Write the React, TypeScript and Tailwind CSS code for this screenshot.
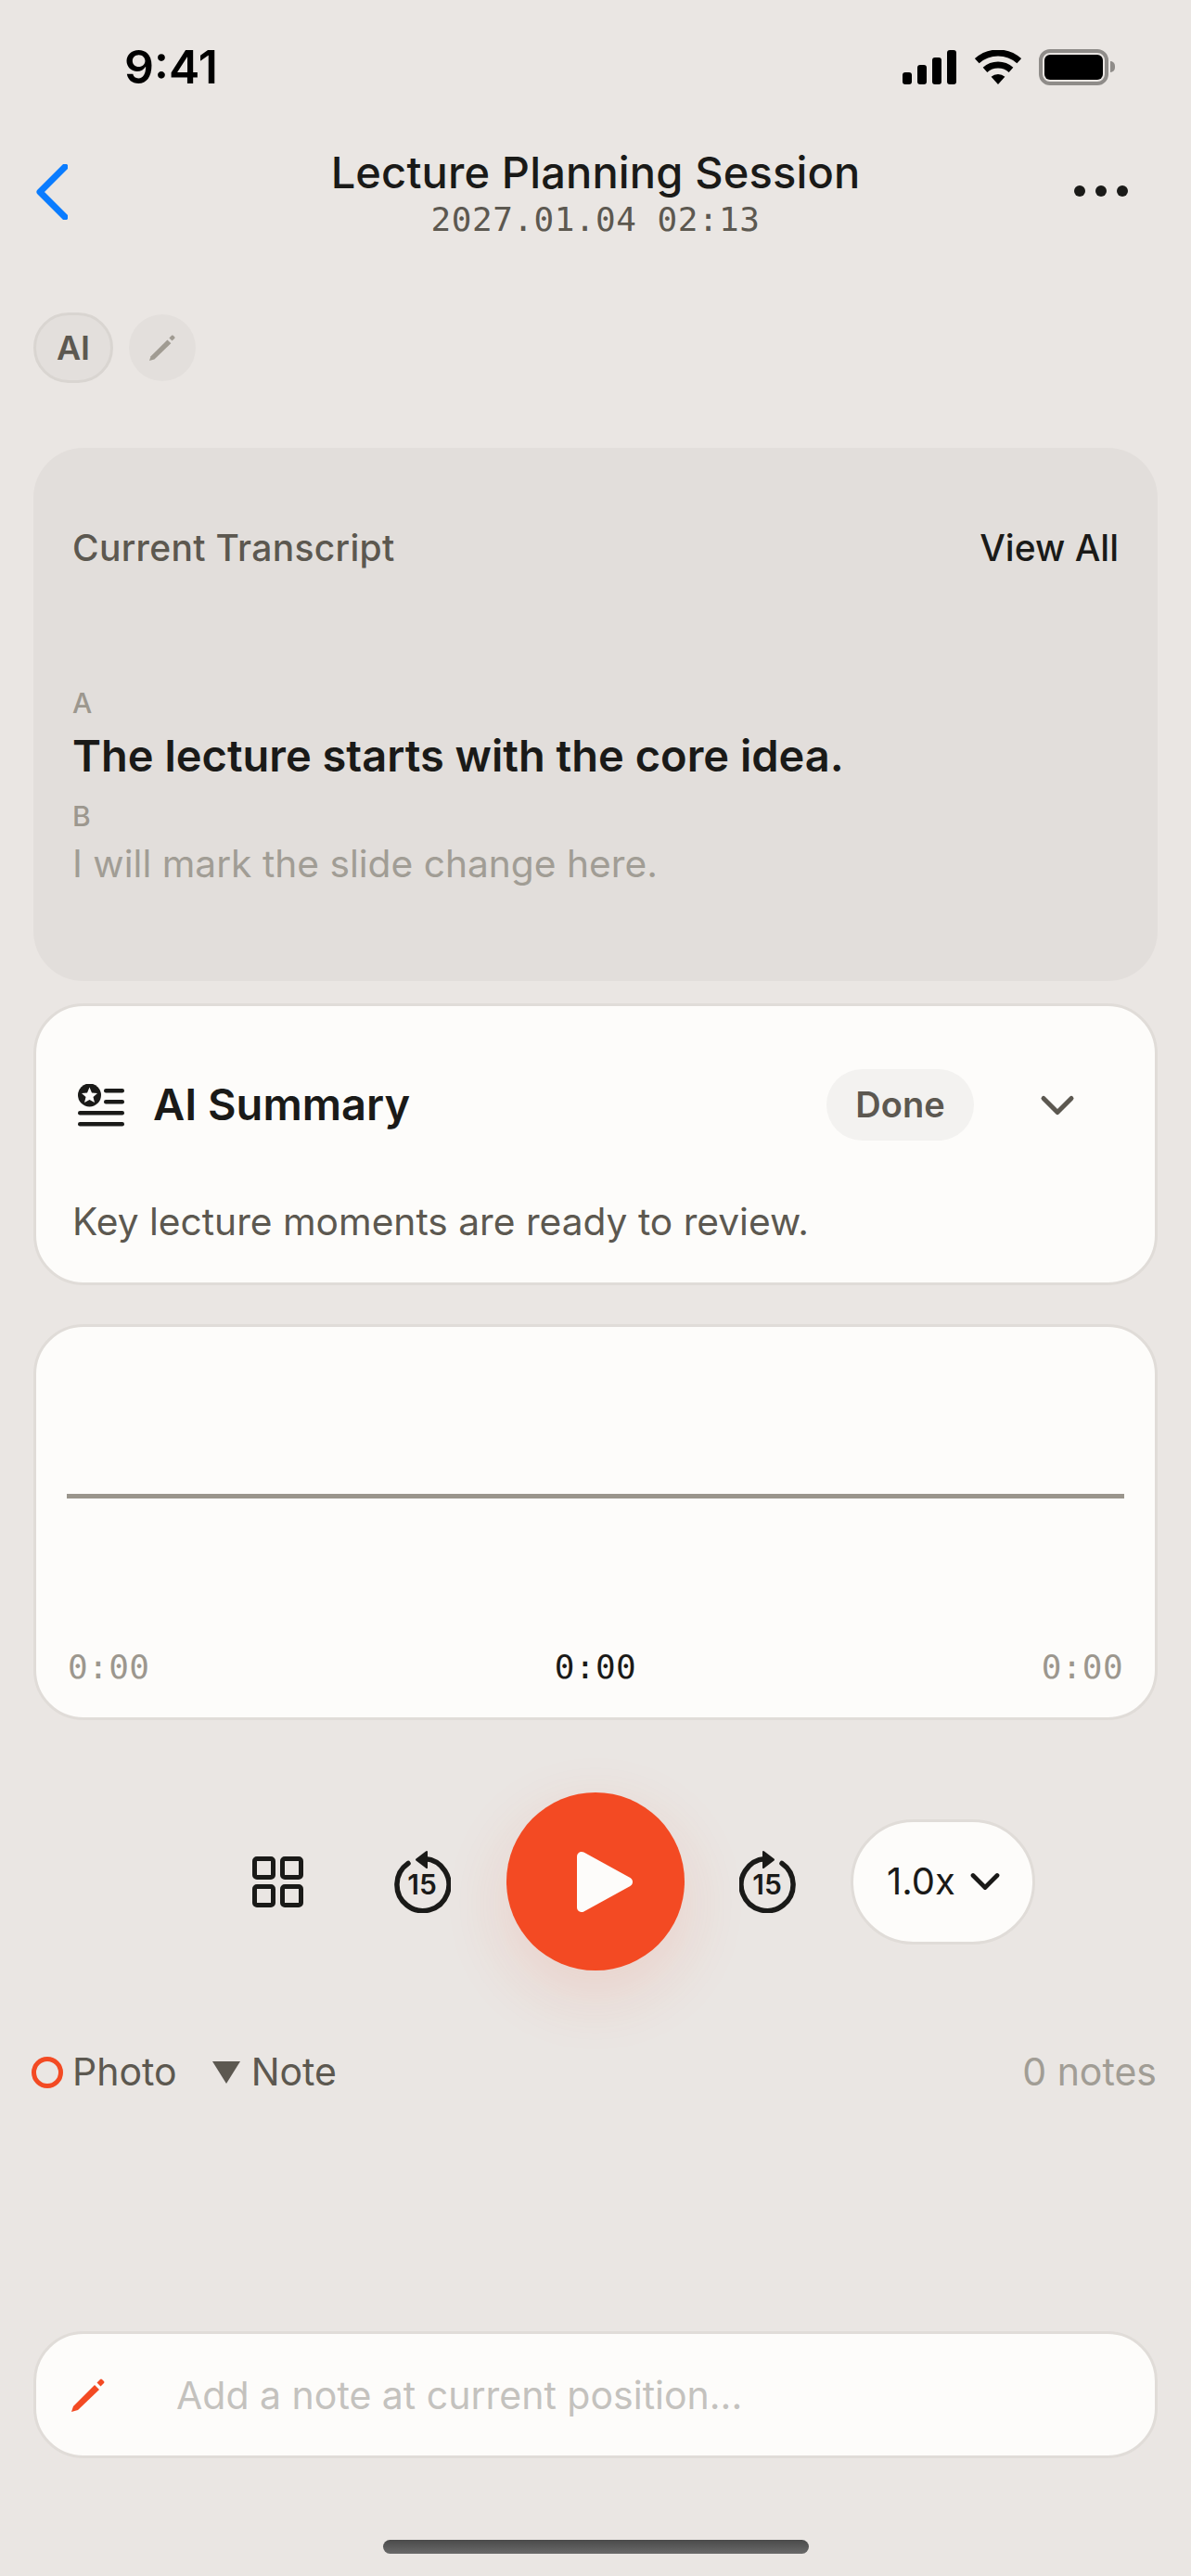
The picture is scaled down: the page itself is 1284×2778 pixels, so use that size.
import { ChevronDown } from 'lucide-react';

const Pencil = ({ className }: { className: string }) => (
  <svg viewBox="0 0 36 36" className={className} fill="currentColor">
    <path d="M0 36 L2 30 L25 7 L30 12 L7 34 Z" />
    <path d="M27.5 4.5 L31 1 Q32 0 33 1 L35 3 Q36 4 35 5 L31.5 8.5 Z" />
  </svg>
);

const Skip = ({ forward }: { forward?: boolean }) => (
  <svg viewBox="0 0 61 67" className="w-[61px] h-[67px]">
    <g transform={forward ? 'translate(61 0) scale(-1 1)' : undefined}>
      <path
        d="M15 13.5 A28 28 0 1 0 33 8.6"
        fill="none"
        stroke="#1a1a18"
        strokeWidth="5.5"
        strokeLinecap="round"
      />
      <path d="M36 0.5 L36 18.5 Q35 19.5 34 18.5 L23.5 10.5 Q22.5 9.5 23.5 8.5 L34 0.5 Q35 -0.5 36 0.5 Z" fill="#1a1a18" />
    </g>
    <text
      x="30"
      y="47"
      textAnchor="middle"
      fontSize="30"
      fontWeight="600"
      fill="#1a1a18"
      style={{ fontFamily: 'Inter, sans-serif' }}
    >
      15
    </text>
  </svg>
);

export default function App() {
  return (
    <div className="w-[1284px] h-[2778px] bg-[#eae6e3] flex flex-col overflow-hidden font-['Inter',sans-serif] text-[#1a1a18]">
      {/* status bar */}
      <div className="h-[144px] shrink-0 flex items-center justify-between pl-[134px] pr-[82px]">
        <span className="text-[50px] font-semibold leading-none text-black">9:41</span>
        <div className="flex items-center">
          <svg viewBox="0 0 58 37" className="w-[58px] h-[37px]" fill="#000">
            <rect x="0" y="24" width="10" height="13" rx="3" />
            <rect x="16" y="16" width="10" height="21" rx="3" />
            <rect x="32" y="8" width="10" height="29" rx="3" />
            <rect x="48" y="0" width="10" height="37" rx="3" />
          </svg>
          <svg viewBox="0 0 50 37" className="w-[50px] h-[37px] ml-[20px]" fill="none" stroke="#000" strokeWidth="7">
            <path d="M2.3 11.7 A34 34 0 0 1 47.7 11.7" />
            <path d="M11 21.4 A21 21 0 0 1 39 21.4" />
            <path d="M25 37 L17.6 28.8 A11 11 0 0 1 32.4 28.8 Z" fill="#000" stroke="none" />
          </svg>
          <div className="flex items-center gap-[2px] ml-[19px]">
            <div className="w-[75px] h-[39px] rounded-[12px] border-[4px] border-[#8f8c89] p-[2px]">
              <div className="w-full h-full rounded-[6px] bg-black" />
            </div>
            <div className="w-[5px] h-[12px] rounded-r-[5px] bg-[#8f8c89]" />
          </div>
        </div>
      </div>

      {/* header */}
      <div className="h-[126px] shrink-0 relative flex flex-col items-center">
        <div className="text-[47px] leading-[58px] mt-[13px] font-medium tracking-[0.15px]">Lecture Planning Session</div>
        <div className="text-[36px] leading-[44px] text-[#5c5850] font-['DejaVu_Sans_Mono',monospace] tracking-[0.5px]">
          2027.01.04 02:13
        </div>
        <svg viewBox="0 0 34 60" className="absolute left-[39px] top-[33px] w-[34px] h-[60px]" fill="none" stroke="#0a7cff" strokeWidth="7" strokeLinecap="round" strokeLinejoin="round">
          <path d="M31 3 L4 30 L31 57" />
        </svg>
        <div className="absolute left-[1158px] top-[56px] flex gap-[11px]">
          <span className="w-[12px] h-[12px] rounded-full bg-[#1a1a18]" />
          <span className="w-[12px] h-[12px] rounded-full bg-[#1a1a18]" />
          <span className="w-[12px] h-[12px] rounded-full bg-[#1a1a18]" />
        </div>
      </div>

      {/* mode chips */}
      <div className="h-[76px] mt-[67px] shrink-0 flex items-center gap-[17px] pl-[36px]">
        <div className="w-[86px] h-[76px] rounded-full bg-[#e3dfdc] border-[3px] border-[#d9d5d1] flex items-center justify-center text-[36px] font-semibold text-[#5c5850]">
          AI
        </div>
        <div className="w-[72px] h-[72px] rounded-full bg-[#e3dfdc] flex items-center justify-center">
          <Pencil className="w-[28px] h-[28px] text-[#a09b92]" />
        </div>
      </div>

      {/* transcript */}
      <div className="mt-[70px] mx-[36px] h-[575px] shrink-0 rounded-[54px] bg-[#e2dedb] px-[42px] flex flex-col">
        <div className="flex items-center justify-between mt-[85px] h-[46px]">
          <span className="text-[39px] font-medium text-[#5c5850] tracking-[0.3px]">Current Transcript</span>
          <span className="text-[39px] font-medium">View All</span>
        </div>
        <div className="mt-[127px] text-[30px] leading-[34px] font-medium text-[#9c978e]">A</div>
        <div className="mt-[11px] text-[47px] leading-[58px] font-semibold">The lecture starts with the core idea.</div>
        <div className="mt-[19px] text-[30px] leading-[34px] font-medium text-[#9c978e]">B</div>
        <div className="mt-[12px] text-[40.7px] leading-[46px] text-[#a19d95]">I will mark the slide change here.</div>
      </div>

      {/* ai summary */}
      <div className="mt-[24px] mx-[36px] h-[304px] shrink-0 rounded-[54px] bg-[#fdfcfa] border-[3px] border-[#e0dcd8] pl-[39px] flex flex-col">
        <div className="flex items-center mt-[68px] h-[77px]">
          <svg viewBox="0 0 50 46" className="w-[50px] h-[46px] ml-[6px]" fill="#1a1a18">
            <circle cx="12.5" cy="12" r="12.5" />
            <path d="M12.5 3.5 L15 9.5 L21 10 L16.5 14 L18 20 L12.5 17 L7 20 L8.5 14 L4 10 L10 9.5 Z" fill="#fdfcfa" />
            <rect x="28" y="5" width="22" height="4.5" rx="2.2" />
            <rect x="28" y="17" width="22" height="4.5" rx="2.2" />
            <rect x="0" y="29" width="50" height="4.5" rx="2.2" />
            <rect x="0" y="41" width="50" height="4.5" rx="2.2" />
          </svg>
          <span className="ml-[31px] text-[47px] font-semibold">AI Summary</span>
          <div className="ml-auto w-[159px] h-[77px] rounded-full bg-[#f3f2f0] flex items-center justify-center text-[38px] font-semibold text-[#5c5850]">
            Done
          </div>
          <ChevronDown className="w-[60px] h-[60px] ml-[60px] mr-[75px] text-[#5c5850]" strokeWidth={2} />
        </div>
        <div className="mt-[65px] text-[40.7px] leading-[46px] text-[#5c5850]">Key lecture moments are ready to review.</div>
      </div>

      {/* waveform */}
      <div className="mt-[42px] mx-[36px] h-[427px] shrink-0 rounded-[54px] bg-[#fdfcfa] border-[3px] border-[#e0dcd8] px-[33px] flex flex-col">
        <div className="mt-[180px] h-[5px] bg-[#9a958c]" />
        <div className="mt-[160px] mx-[1px] flex items-center justify-between font-['DejaVu_Sans_Mono',monospace] text-[36px] leading-[44px] tracking-[0.4px] text-[#9c978e]">
          <span>0:00</span>
          <span className="text-[#1a1a18]">0:00</span>
          <span>0:00</span>
        </div>
      </div>

      {/* controls */}
      <div className="mt-[78px] h-[192px] shrink-0 flex items-center pl-[272px]">
        <div className="grid grid-cols-2 gap-[5px] w-[55px] h-[55px] mr-[98px]">
          <span className="rounded-[5px] border-[5px] border-[#1a1a18]" />
          <span className="rounded-[5px] border-[5px] border-[#1a1a18]" />
          <span className="rounded-[5px] border-[5px] border-[#1a1a18]" />
          <span className="rounded-[5px] border-[5px] border-[#1a1a18]" />
        </div>
        <Skip />
        <div className="w-[192px] h-[192px] ml-[60px] mr-[59px] rounded-full bg-[#f34a23] shadow-[0_24px_72px_rgba(243,74,35,0.14)] flex items-center justify-center">
          <svg viewBox="0 0 60 65" className="w-[60px] h-[65px] ml-[20px]" fill="#fdfcfa" stroke="#fdfcfa" strokeWidth="10" strokeLinejoin="round">
            <path d="M5 5 L55 32.5 L5 60 Z" />
          </svg>
        </div>
        <Skip forward />
        <div className="ml-[59px] w-[199px] h-[135px] rounded-full bg-[#fdfcfa] border-[3px] border-[#e0dcd8] flex items-center pl-[36px]">
          <span className="text-[40px]">1.0x</span>
          <ChevronDown className="w-[52px] h-[52px] ml-[6px] shrink-0" strokeWidth={2.2} />
        </div>
      </div>

      {/* note row */}
      <div className="mt-[85px] h-[50px] shrink-0 flex items-center pl-[34px] pr-[37px] text-[41px] text-[#5c5850]">
        <span className="w-[34px] h-[34px] rounded-full border-[5px] border-[#f34a23]" />
        <span className="ml-[10px]">Photo</span>
        <svg viewBox="0 0 30 24" className="w-[30px] h-[24px] ml-[38px]" fill="#5c5850">
          <path d="M0 0 H30 L15 24 Z" />
        </svg>
        <span className="ml-[12px]">Note</span>
        <span className="ml-auto text-[#a19d95]">0 notes</span>
      </div>

      {/* note input */}
      <div className="mt-[254px] mx-[36px] h-[137px] shrink-0 rounded-[54px] bg-[#fdfcfa] border-[3px] border-[#e0dcd8] flex items-center pl-[38px]">
        <Pencil className="w-[36px] h-[36px] text-[#f34a23]" />
        <span className="ml-[77px] pt-[2px] text-[41px] text-[#c4c2be]">Add a note at current position...</span>
      </div>

      {/* home indicator */}
      <div className="mt-[88px] mx-auto w-[459px] h-[15px] rounded-full bg-gradient-to-b from-[#4a4a4a] to-[#6a6a6a] shrink-0" />
    </div>
  );
}
